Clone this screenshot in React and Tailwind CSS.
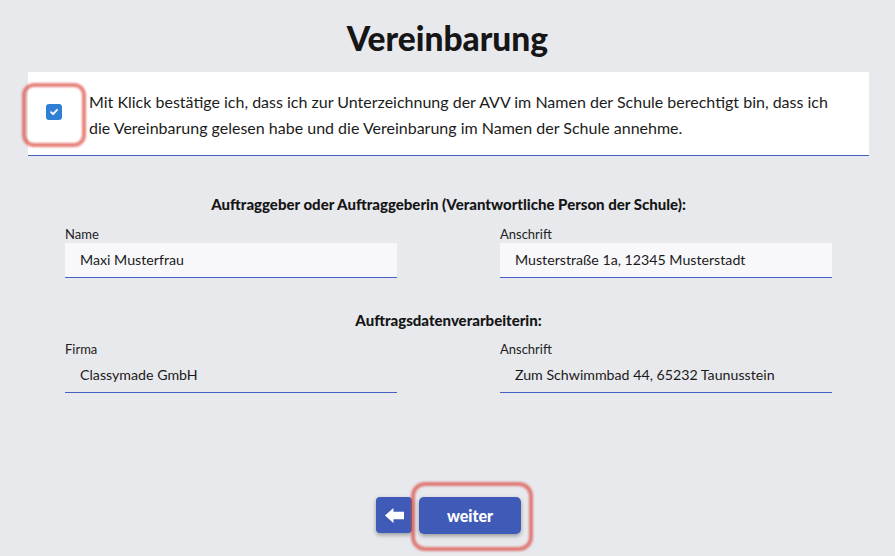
import React from "react";

function Field({ label, value, filled }) {
  return (
    <div className="flex flex-col w-[332px]">
      <div className="text-[13px] leading-[16px] text-[#222] pb-[1px]">{label}</div>
      <div
        className={`h-[35px] flex items-center pl-[15px] text-[14.2px] text-[#1a1a1a] border-b border-[#4560c2] ${
          filled ? "bg-[#f8f8fa]" : ""
        }`}
      >
        {value}
      </div>
    </div>
  );
}

export default function App() {
  return (
    <div
      className="min-h-[556px] w-[895px] bg-[#e8e9ed] overflow-hidden"
      style={{ fontFamily: "Lato, 'Noto Sans', sans-serif" }}
    >
      <h1 className="pt-[18px] text-center text-[33.5px] leading-[40px] font-black text-[#161616]">
        Vereinbarung
      </h1>

      <div className="ml-[28px] mt-[14px] w-[841px] bg-white border-b border-[#4560c2] flex pl-[18px] pt-[17px] pb-[14px]">
        <div className="relative w-[16px] h-[16px] mt-[15px] shrink-0">
          <div className="w-[16px] h-[16px] rounded-[3px] bg-[#2f7fd6] flex items-center justify-center">
            <svg width="10" height="10" viewBox="0 0 10 10">
              <path d="M2 5.2 L4.1 7.2 L8 2.8" fill="none" stroke="white" strokeWidth="1.8" strokeLinecap="round" strokeLinejoin="round" />
            </svg>
          </div>
          <div className="absolute left-[-24px] top-[-21px] w-[64px] h-[64px] rounded-[12px] border-[4px] border-[#dc4a40]/70 blur-[1px]" />
        </div>
        <p className="ml-[27px] w-[745px] text-[16px] leading-[26px] text-[#1c1c1c]">
          Mit Klick bestätige ich, dass ich zur Unterzeichnung der AVV im Namen der Schule berechtigt bin, dass ich die Vereinbarung gelesen habe und die Vereinbarung im Namen der Schule annehme.
        </p>
      </div>

      <div className="w-[767px] ml-[65px]">
        <h2 className="mt-[38px] text-center text-[15px] leading-[20px] font-black text-[#161616]">
          Auftraggeber oder Auftraggeberin (Verantwortliche Person der Schule):
        </h2>
        <div className="mt-[12px] flex justify-between">
          <Field label="Name" value="Maxi Musterfrau" filled />
          <Field label="Anschrift" value="Musterstraße 1a, 12345 Musterstadt" filled />
        </div>

        <h2 className="mt-[32px] text-center text-[15px] leading-[20px] font-black text-[#161616]">
          Auftragsdatenverarbeiterin:
        </h2>
        <div className="mt-[11px] flex justify-between">
          <Field label="Firma" value="Classymade GmbH" />
          <Field label="Anschrift" value="Zum Schwimmbad 44, 65232 Taunusstein" />
        </div>
      </div>

      <div className="mt-[104px] flex justify-center gap-[7px] pl-[2px]">
        <button className="w-[36px] h-[36px] rounded-[4px] bg-[#3f5bb7] text-white flex items-center justify-center shadow-[0_2px_4px_rgba(0,0,0,0.35)]">
          <svg width="19" height="15" viewBox="0 0 18 14">
            <path d="M0 7 L8 0 L8 3.5 L18 3.5 L18 10.5 L8 10.5 L8 14 Z" fill="white" />
          </svg>
        </button>
        <div className="relative">
          <button className="w-[102px] h-[37px] rounded-[5px] bg-[#3f5bb7] text-white font-black text-[16px] shadow-[0_2px_4px_rgba(0,0,0,0.35)]">
            weiter
          </button>
          <div className="absolute left-[-8px] top-[-15px] w-[122px] h-[69px] rounded-[14px] border-[4px] border-[#dc4a40]/70 blur-[1px] pointer-events-none" />
        </div>
      </div>
    </div>
  );
}
